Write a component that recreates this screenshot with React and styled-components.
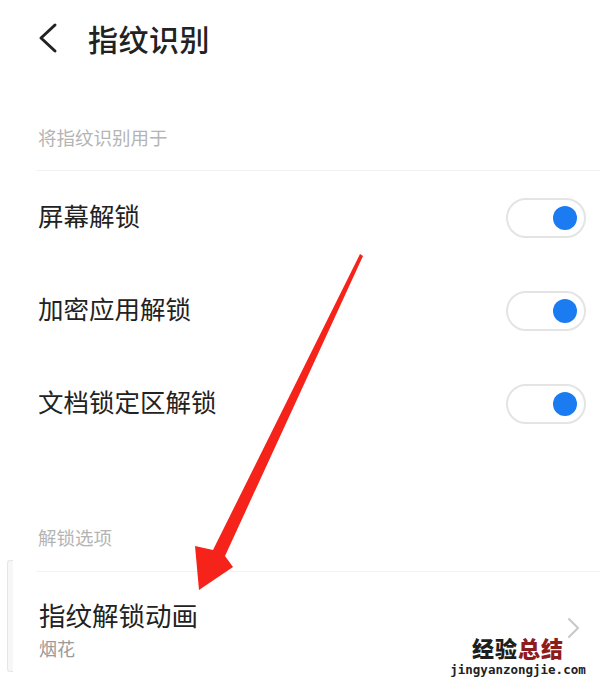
import styled, { createGlobalStyle } from 'styled-components';

const GlobalStyle = createGlobalStyle`
  html, body {
    margin: 0;
    padding: 0;
    background: #fff;
  }
  body {
    font-family: "Noto Sans CJK SC", "Noto Sans", sans-serif;
    color: #222;
  }
`;

const Page = styled.div`
  position: relative;
  width: 600px;
  height: 684px;
  overflow: hidden;
  background: #fff;
`;

const Header = styled.div`
  height: 76px;
  display: flex;
  align-items: center;
  padding-left: 36px;
  gap: 28px;
`;

const Title = styled.h1`
  margin: 0;
  font-size: 30px;
  font-weight: 500;
  color: #222;
  letter-spacing: 0.5px;
`;

const SectionLabel = styled.div`
  height: ${(p) => p.height}px;
  display: flex;
  align-items: flex-end;
  padding-left: 38px;
  padding-bottom: ${(p) => p.bottom}px;
  box-sizing: border-box;
  font-size: 18.5px;
  color: #b4b4b4;
`;

const Group = styled.div`
  position: relative;
  margin-left: 36px;
  border-top: 1.5px solid #f2f2f2;
`;

const Row = styled.div`
  height: 93px;
  display: flex;
  align-items: center;
  justify-content: space-between;
  padding-right: 14px;
  margin-left: 2px;
`;

const RowLabel = styled.span`
  font-size: 25.5px;
  color: #222;
  margin-bottom: 7px;
`;

const Switch = styled.div`
  width: 80px;
  height: 40px;
  box-sizing: border-box;
  border-radius: 20px;
  border: 2px solid #e4e4e4;
  display: flex;
  align-items: center;
  justify-content: flex-end;
  padding-right: 7px;
  background: #fff;
`;

const Knob = styled.div`
  width: 24px;
  height: 24px;
  border-radius: 50%;
  background: #1b7cf2;
`;

const LinkRow = styled.div`
  display: flex;
  align-items: center;
  justify-content: space-between;
  padding: 23px 20px 0 3px;
`;

const LinkText = styled.div`
  display: flex;
  flex-direction: column;
  gap: 1px;
`;

const LinkTitle = styled.span`
  font-size: 26.5px;
  color: #222;
`;

const LinkSub = styled.span`
  font-size: 18px;
  color: #9a9a9a;
`;

const EdgeTab = styled.div`
  position: absolute;
  left: 7px;
  top: 560px;
  width: 5px;
  height: 110px;
  border-radius: 3px 0 0 3px;
  border: 1.5px solid #e6e6e6;
  border-right: none;
  background: #f7f7f7;
`;

const Overlay = styled.svg`
  position: absolute;
  left: 0;
  top: 0;
  pointer-events: none;
`;

const Watermark = styled.div`
  position: absolute;
  left: 450px;
  top: 634px;
  width: 136px;
  display: flex;
  flex-direction: column;
  align-items: center;
  gap: 3px;
`;

const MarkTitle = styled.div`
  font-family: "Noto Sans CJK SC", sans-serif;
  font-weight: 900;
  font-size: 22px;
  line-height: 26px;
  letter-spacing: 1px;
  color: #1e1e1e;
  span {
    color: #8e1c1c;
  }
`;

const MarkUrl = styled.div`
  font-family: "DejaVu Sans Mono", monospace;
  font-size: 12.5px;
  line-height: 14px;
  color: #222;
  font-weight: 700;
`;

const BackIcon = () => (
  <svg width="24" height="32" viewBox="0 0 24 32">
    <polyline
      points="19,3 5,16 19,29"
      fill="none"
      stroke="#222"
      strokeWidth="3"
      strokeLinecap="round"
      strokeLinejoin="round"
    />
  </svg>
);

const Chevron = () => (
  <svg width="14" height="22" viewBox="0 0 14 22">
    <polyline
      points="3,2 12,11 3,20"
      fill="none"
      stroke="#c8c8c8"
      strokeWidth="2"
      strokeLinecap="round"
      strokeLinejoin="round"
    />
  </svg>
);

const toggles = ['屏幕解锁', '加密应用解锁', '文档锁定区解锁'];

const App = () => (
  <Page>
    <GlobalStyle />
    <Header>
      <BackIcon />
      <Title>指纹识别</Title>
    </Header>
    <SectionLabel height={94} bottom={20}>
      将指纹识别用于
    </SectionLabel>
    <Group>
      {toggles.map((label) => (
        <Row key={label}>
          <RowLabel>{label}</RowLabel>
          <Switch>
            <Knob />
          </Switch>
        </Row>
      ))}
    </Group>
    <SectionLabel height={121} bottom={21}>
      解锁选项
    </SectionLabel>
    <Group>
      <LinkRow>
        <LinkText>
          <LinkTitle>指纹解锁动画</LinkTitle>
          <LinkSub>烟花</LinkSub>
        </LinkText>
        <Chevron />
      </LinkRow>
    </Group>
    <EdgeTab />
    <Overlay width="600" height="684" viewBox="0 0 600 684">
      <polygon
        points="360,254 363,256 225,556 233,567 199,590 195,546 213,550"
        fill="#f5231a"
      />
    </Overlay>
    <Watermark>
      <MarkTitle>
        经验<span>总结</span>
      </MarkTitle>
      <MarkUrl>jingyanzongjie.com</MarkUrl>
    </Watermark>
  </Page>
);

export default App;
